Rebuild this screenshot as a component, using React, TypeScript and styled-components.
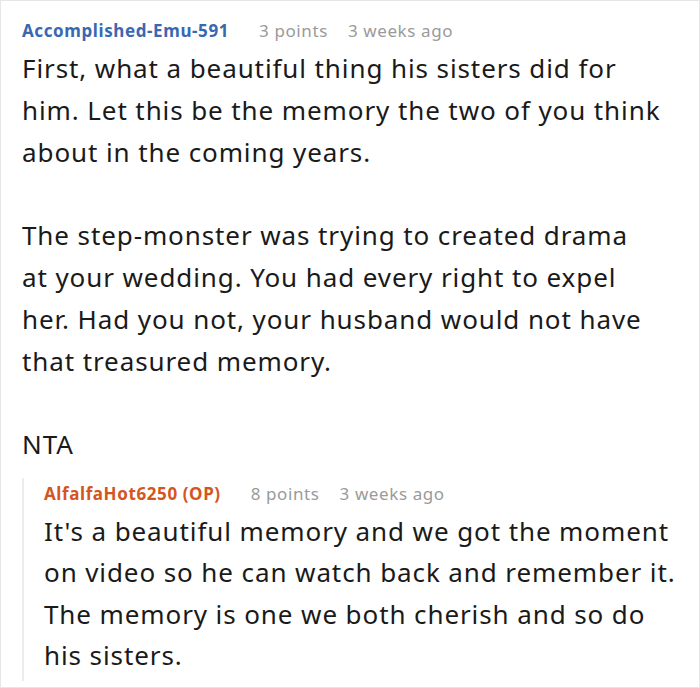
import React from "react";
import styled, { createGlobalStyle } from "styled-components";

const Global = createGlobalStyle`
  html, body { margin: 0; padding: 0; background: #fff; }
  body { font-family: "Noto Sans", "Open Sans", sans-serif; }
`;

const Frame = styled.div`
  box-sizing: border-box;
  width: 700px;
  height: 688px;
  border: 1px solid #e6e6e6;
  padding: 14px 10px 0 21px;
  overflow: hidden;
`;

const Comment = styled.div`
  display: flex;
  flex-direction: column;
`;

const Meta = styled.div`
  display: flex;
  align-items: baseline;
  height: 32px;
  font-size: 17px;
  line-height: 32px;
  letter-spacing: 0.6px;
  white-space: nowrap;
`;

const Author = styled.span<{ $op?: boolean }>`
  font-weight: 700;
  color: ${(p) => (p.$op ? "#d4561e" : "#3968b2")};
  margin-right: 30px;
`;

const Info = styled.span`
  color: #9a9a9a;
  margin-right: 20px;
`;

const Body = styled.div<{ $lh: number }>`
  font-size: 26px;
  line-height: ${(p) => p.$lh}px;
  letter-spacing: 0.9px;
  color: #1a1a1a;
  white-space: nowrap;
  margin-top: 1px;
`;

const Para = styled.p<{ $gap: number }>`
  margin: 0 0 ${(p) => p.$gap}px 0;
  &:last-child { margin-bottom: 0; }
`;

const Reply = styled.div`
  margin-top: 12px;
  border-left: 2px solid #ececec;
  padding-left: 20px;
  padding-bottom: 4px;
`;

const mainParas = [
  [
    "First, what a beautiful thing his sisters did for",
    "him. Let this be the memory the two of you think",
    "about in the coming years.",
  ],
  [
    "The step-monster was trying to created drama",
    "at your wedding. You had every right to expel",
    "her. Had you not, your husband would not have",
    "that treasured memory.",
  ],
  ["NTA"],
];

const replyParas = [
  [
    "It's a beautiful memory and we got the moment",
    "on video so he can watch back and remember it.",
    "The memory is one we both cherish and so do",
    "his sisters.",
  ],
];

function Paras({ paras, gap }: { paras: string[][]; gap: number }) {
  return (
    <>
      {paras.map((lines, i) => (
        <Para key={i} $gap={gap}>
          {lines.map((l, j) => (
            <React.Fragment key={j}>
              {l}
              {j < lines.length - 1 && <br />}
            </React.Fragment>
          ))}
        </Para>
      ))}
    </>
  );
}

export default function App() {
  return (
    <>
      <Global />
      <Frame>
        <Comment>
          <Meta>
            <Author>Accomplished-Emu-591</Author>
            <Info>3 points</Info>
            <Info>3 weeks ago</Info>
          </Meta>
          <Body $lh={41.8}>
            <Paras paras={mainParas} gap={41.8} />
          </Body>
          <Reply>
            <Meta>
              <Author $op>AlfalfaHot6250 (OP)</Author>
              <Info>8 points</Info>
              <Info>3 weeks ago</Info>
            </Meta>
            <Body $lh={41.4}>
              <Paras paras={replyParas} gap={41.4} />
            </Body>
          </Reply>
        </Comment>
      </Frame>
    </>
  );
}
